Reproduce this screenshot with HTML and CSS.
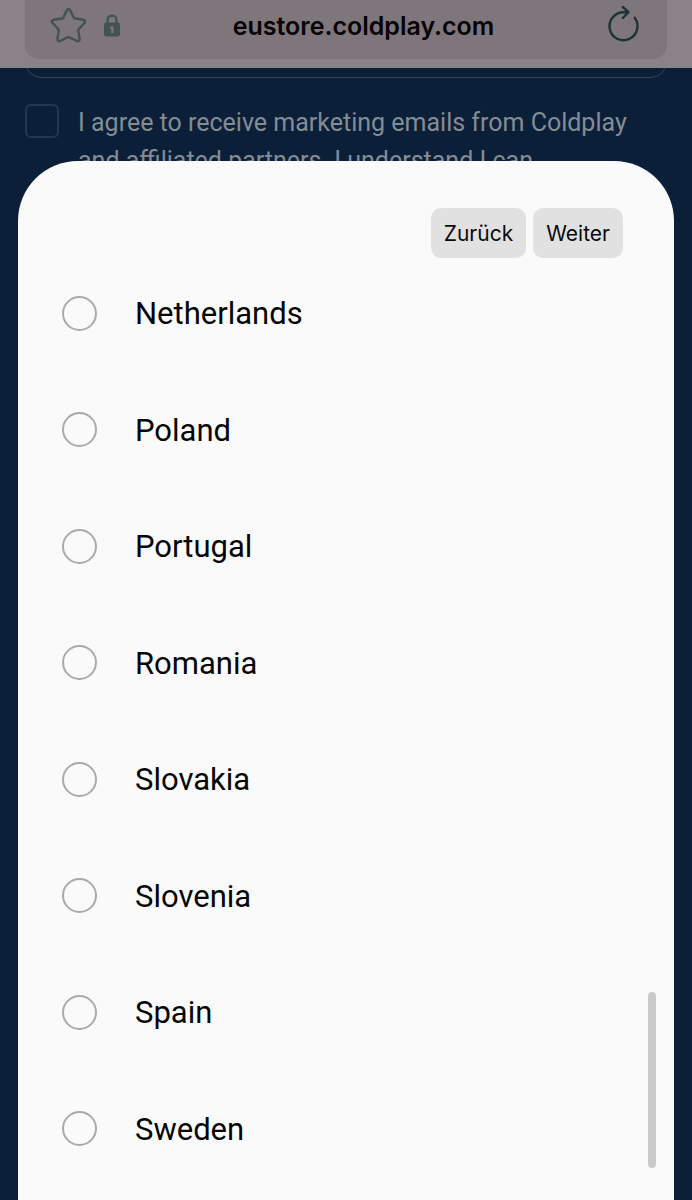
FILE: index.html
```html
<!DOCTYPE html>
<html lang="de">
<head>
    <meta charset="UTF-8">
    <meta name="viewport" content="width=device-width, initial-scale=1.0">
    <title>eustore.coldplay.com</title>
    <link rel="stylesheet" href="styles.css">
</head>
<body>
    <header class="toolbar">
        <div class="address-bar">
            <button class="icon-button" type="button" aria-label="Lesezeichen">
                <svg class="icon-star" viewBox="0 0 36 36" width="36" height="36">
                    <path d="M16.800 2.200Q18.500.2 20.200 2.200L24 10.200l9.500 1.600q2.500.8 1.100 3l-6.400 7 1.400 9.400q-.1 2.700-2.600 1.800l-8.500-4.100-8.500 4.100q-2.500.9-2.600-1.800l1.400-9.400-6.400-7q-1.400-2.200 1.100-3l9.500-1.600z"/>
                </svg>
            </button>
            <svg class="icon-lock" viewBox="0 0 18 24" width="18" height="24">
                <path class="shackle" d="M4.500 10V6a4.500 4.500 0 0 1 9 0V10"/>
                <path class="lock-body" fill-rule="evenodd" d="M3 8.500h12a2 2 0 0 1 2 2v10a2 2 0 0 1-2 2H3a2 2 0 0 1-2-2v-10a2 2 0 0 1 2-2zM7.200 12.500v2h1V19h2.300v-6.500z"/>
            </svg>
            <span class="url">eustore.coldplay.com</span>
            <button class="icon-button" type="button" aria-label="Neu laden">
                <svg class="icon-reload" viewBox="0 0 36 38" width="36" height="38">
                    <path d="M28.700 10.800A14 14 0 1 1 17.500 5.200h4.500"/>
                    <path d="M16.800 0l5.700 5.200-5.700 5.800"/>
                </svg>
            </button>
        </div>
    </header>

    <main class="page">
        <form class="signup">
            <input class="signup-email" type="email" aria-label="Email">
            <div class="consent">
                <input class="consent-check" type="checkbox" id="consent">
                <label class="consent-text" for="consent">I agree to receive marketing emails from Coldplay and affiliated partners. I understand I can</label>
            </div>
        </form>
    </main>

    <!-- Country picker -->
    <section class="sheet">
        <div class="sheet-actions">
            <button class="sheet-button" type="button">Zurück</button>
            <button class="sheet-button" type="button">Weiter</button>
        </div>
        <div class="options">
            <label class="option"><input class="option-radio" type="radio" name="country"><span class="option-name">Netherlands</span></label>
            <label class="option"><input class="option-radio" type="radio" name="country"><span class="option-name">Poland</span></label>
            <label class="option"><input class="option-radio" type="radio" name="country"><span class="option-name">Portugal</span></label>
            <label class="option"><input class="option-radio" type="radio" name="country"><span class="option-name">Romania</span></label>
            <label class="option"><input class="option-radio" type="radio" name="country"><span class="option-name">Slovakia</span></label>
            <label class="option"><input class="option-radio" type="radio" name="country"><span class="option-name">Slovenia</span></label>
            <label class="option"><input class="option-radio" type="radio" name="country"><span class="option-name">Spain</span></label>
            <label class="option"><input class="option-radio" type="radio" name="country"><span class="option-name">Sweden</span></label>
        </div>
        <div class="scrollbar"></div>
    </section>
</body>
</html>
```

FILE: styles.css
```css
* {
    box-sizing: border-box;
}

body {
    margin: 0;
    min-height: 100vh;
    overflow: hidden;
    background: #0b1f38;
    font-family: Roboto, sans-serif;
}

button {
    border: none;
    cursor: pointer;
}

/* Browser toolbar */
.toolbar {
    position: relative;
    z-index: 1;
    padding: 0 25px 9px;
    background: #8a8286;
}

.address-bar {
    display: flex;
    align-items: center;
    height: 59px;
    padding: 0 25px 8px;
    border-radius: 0 0 14px 14px;
    background: #7e767a;
}

.icon-button {
    display: flex;
    padding: 0;
    background: none;
}

.icon-star,
.icon-reload,
.shackle {
    fill: none;
    stroke: #435351;
    stroke-width: 2.4;
    stroke-linecap: round;
    stroke-linejoin: round;
}

.icon-lock {
    margin-left: 17px;
}

.lock-body {
    fill: #435351;
}

.icon-reload {
    overflow: visible;
    stroke: #1c3434;
}

.url {
    flex: 1;
    text-align: center;
    font-family: Inter, sans-serif;
    font-size: 25px;
    font-weight: 600;
    line-height: 32px;
    color: #050305;
}

/* Page behind the sheet */
.signup {
    padding: 0 25px;
}

.signup-email {
    display: block;
    width: 100%;
    height: 60px;
    margin-top: -50px;
    border: 1px solid #34435a;
    border-radius: 16px;
    background: transparent;
}

.consent {
    display: flex;
    align-items: flex-start;
    gap: 19px;
    margin-top: 26px;
}

.consent-check {
    appearance: none;
    flex: none;
    width: 34px;
    height: 34px;
    margin: 0;
    border: 2px solid #253650;
    border-radius: 6px;
}

.consent-text {
    font-size: 25px;
    line-height: 38px;
    color: #848c94;
}

/* Country picker */
.sheet {
    position: fixed;
    z-index: 2;
    top: 161px;
    right: 18px;
    bottom: 0;
    left: 18px;
    display: flex;
    flex-direction: column;
    padding: 47px 44px 52px;
    border-radius: 60px 60px 0 0;
    background: #fafafa;
}

.sheet-actions {
    display: flex;
    justify-content: flex-end;
    gap: 7px;
    padding-right: 7px;
}

.sheet-button {
    height: 50px;
    padding: 0 13px;
    border-radius: 10px;
    background: #e1e1e1;
    font-family: Inter, sans-serif;
    font-size: 21px;
    color: #0a0a0a;
}

.options {
    flex: 1;
    display: flex;
    flex-direction: column;
    justify-content: space-between;
    margin-top: 36px;
}

.option {
    display: flex;
    align-items: center;
    gap: 38px;
    font-size: 31px;
    line-height: 36px;
    color: #050505;
}

.option-name {
    padding-top: 2px;
}

.option-radio {
    appearance: none;
    width: 35px;
    height: 35px;
    margin: 0;
    border: 2px solid #aaa;
    border-radius: 50%;
}

.scrollbar {
    position: absolute;
    right: 18px;
    bottom: 32px;
    width: 8px;
    height: 176px;
    border-radius: 4px;
    background: #cacaca;
}
```
